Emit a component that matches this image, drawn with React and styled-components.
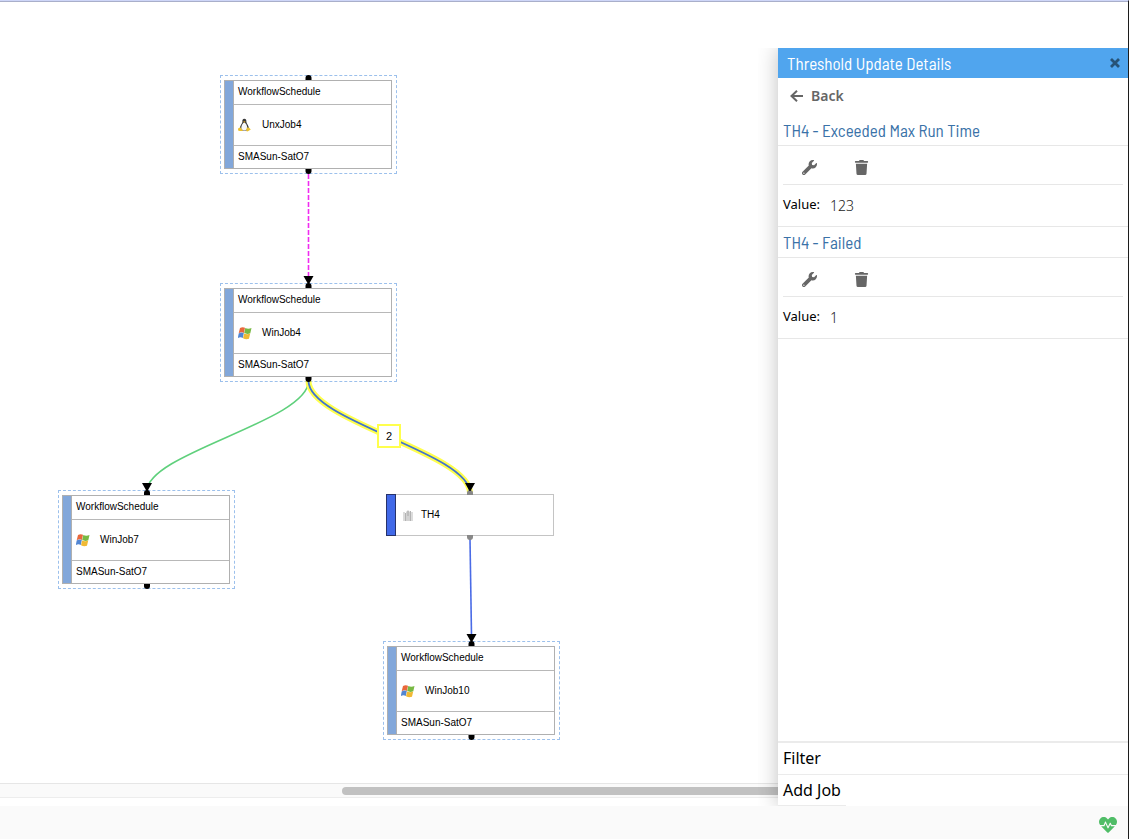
import React from "react"
import styled, { createGlobalStyle } from "styled-components"
import { FaWrench, FaTrash, FaHeartbeat } from "react-icons/fa"

const GlobalStyle = createGlobalStyle`
  * {
    box-sizing: border-box;
  }

  body {
    margin: 0;
    background: white;
    color: black;
    font-family: "Noto Sans", sans-serif;
  }

  h2, h3, p, dl, dt, dd {
    margin: 0;
  }

  button {
    border: none;
    padding: 0;
    background: transparent;
    font-family: inherit;
    cursor: pointer;
  }
`

const Page = styled.div`
  min-height: 100vh;
  display: flex;
  flex-direction: column;
  border-top: 1px solid #ced6f8;
  border-right: 1px solid #1c1c1c;
`

const Workspace = styled.main`
  flex: 1;
  display: flex;
  border-top: 1px solid #a9afca;
`

const Board = styled.section`
  flex: 1;
  min-width: 0;
  display: flex;
  flex-direction: column;
  padding-bottom: 8px;
`

const Canvas = styled.div`
  position: relative;
  flex: 1;
  min-height: 760px;
  overflow: hidden;
  font-family: "Liberation Sans", Arial, sans-serif;
  font-size: 10px;
  line-height: 12px;
`

const ScrollTrack = styled.div`
  height: 15px;
  display: flex;
  align-items: center;
  justify-content: flex-end;
  background: #fafafa;
  border-top: 1px solid #e6e6e6;
  border-bottom: 1px solid #ededed;
`

const ScrollThumb = styled.div`
  width: 56%;
  height: 8px;
  border-radius: 4px 0 0 4px;
  background: #c1c1c1;
`

const Edges = styled.svg`
  position: absolute;
  left: 0;
  top: 0;
  pointer-events: none;
`

const NodeFrame = styled.div`
  position: absolute;
  left: ${({ $x }) => $x}px;
  top: ${({ $y }) => $y}px;
  width: 177px;
  padding: 4px 4px 4px 3px;
  border: 1px dashed #9cc0ec;
`

const JobCard = styled.article`
  display: flex;
  border: 1px solid #b0b0b0;
  background: white;
`

const JobStripe = styled.div`
  width: 9px;
  background: #82a7da;
  border-right: 1px solid #b0b0b0;
`

const JobRows = styled.div`
  flex: 1;
  display: grid;
  grid-template-rows: 23px 41px 23px;
`

const JobRow = styled.div`
  display: flex;
  align-items: center;
  gap: 10px;
  padding: 0 0 1px 4px;

  & + & {
    border-top: 1px solid #b8b8b8;
  }
`

const ThresholdCard = styled.article`
  position: absolute;
  left: ${({ $x }) => $x}px;
  top: ${({ $y }) => $y}px;
  width: 168px;
  height: 42px;
  display: flex;
  align-items: center;
  gap: 7px;
  border: 1px solid #c4c4c4;
  border-left: none;
  background: white;
`

const ThresholdStripe = styled.div`
  width: 10px;
  height: 42px;
  background: #4169e8;
  border: 1px solid #27336b;
`

const EdgeBadge = styled.div`
  position: absolute;
  left: ${({ $x }) => $x}px;
  top: ${({ $y }) => $y}px;
  width: 24px;
  height: 24px;
  display: flex;
  align-items: center;
  justify-content: center;
  border: 2px solid #ffff4d;
  background: white;
  font-size: 11px;
`

const Panel = styled.aside`
  width: 350px;
  margin-top: 46px;
  display: flex;
  flex-direction: column;
  background: white;
  box-shadow: 0 0 20px rgba(0, 0, 0, 0.25);
  clip-path: inset(0 0 0 -20px);
`

const PanelHeader = styled.header`
  height: 30px;
  display: flex;
  align-items: center;
  justify-content: space-between;
  padding: 0 8px 0 9px;
  background: #50a5ee;
  color: white;
`

const PanelTitle = styled.h2`
  font: 400 17px/24px "Barlow Semi Condensed", "Barlow Condensed", "Liberation Sans Narrow", Roboto, sans-serif;
`

const CloseButton = styled.button`
  display: flex;
  color: #275377;
`

const BackButton = styled.button`
  height: 36px;
  display: flex;
  align-items: center;
  gap: 8px;
  padding: 0 12px 1px;
  color: #666;
  font-size: 14px;
  font-weight: 600;
`

const Threshold = styled.section`
  border-bottom: 1px solid #e7e7e7;

  & + & {
    margin-top: -1px;
  }
`

const ThresholdTitle = styled.h3`
  height: 32px;
  padding: 4px 5px;
  border-bottom: 1px solid #e7e7e7;
  color: #3a72a8;
  font: 400 17px/24px "Barlow Semi Condensed", "Barlow Condensed", "Liberation Sans Narrow", Roboto, sans-serif;
`

const Tools = styled.div`
  height: 39px;
  display: flex;
  align-items: center;
  gap: 37px;
  margin: 0 5px;
  padding: 4px 19px 0;
  border-bottom: 1px solid #e7e7e7;
`

const ToolButton = styled.button`
  display: flex;
  color: #666;
  font-size: 15px;
`

const ValueLine = styled.dl`
  height: 41px;
  display: flex;
  align-items: center;
  gap: 10px;
  padding: 0 5px 2px;
  font-size: 13px;

  dt {
    padding-bottom: 2px;
  }

  dd {
    padding-top: 2px;
    color: #222;
    font-size: 14px;
    font-weight: 300;
  }
`

const PanelMenu = styled.nav`
  margin-top: auto;
  display: flex;
  flex-direction: column;
  align-items: flex-start;
  border-top: 2px solid #ebebeb;
`

const MenuButton = styled.button`
  width: ${({ $wide }) => ($wide ? "100%" : "auto")};
  height: ${({ $wide }) => ($wide ? 32 : 31)}px;
  padding: 0 5px ${({ $wide }) => ($wide ? 2 : 0)}px;
  border-bottom: 1px solid #ebebeb;
  color: black;
  font-size: 16px;
  text-align: left;
`

const StatusBar = styled.footer`
  height: 33px;
  display: flex;
  align-items: center;
  justify-content: flex-end;
  padding: 5px 11px 0;
  background: #fafafa;
  color: #50bd67;
  font-size: 18px;
`

const jobs = [
  { name: "UnxJob4", os: "linux", x: 220, y: 73 },
  { name: "WinJob4", os: "windows", x: 220, y: 281 },
  { name: "WinJob7", os: "windows", x: 58, y: 488 },
  { name: "WinJob10", os: "windows", x: 383, y: 639 },
]

const thresholds = [
  { name: "TH4 - Exceeded Max Run Time", value: "123" },
  { name: "TH4 - Failed", value: "1" },
]

const LinuxIcon = () => (
  <svg width="14" height="14" viewBox="0 0 14 14" aria-hidden="true">
    <path d="M6.300 .8c-1.700 0-2.100 1.300-1.900 3.100C4.200 5.500 1.900 7.500 1.800 10.500L3.500 12.500h5.400l2-2C10.900 7.600 8.500 5.600 8.400 3.900 8.500 2 7.900.8 6.300.8z" fill="#3a3a3a" />
    <path d="M6.300 4.600C4.700 5.200 2.900 8 3.400 11.200c1.600 1.300 4.200 1.300 5.800 0C9.700 8.400 7.900 5.200 6.300 4.600z" fill="#f7f7f7" />
    <path d="M5.100 3.800l1.300-.5 1.200.5-1.200 1z" fill="#e8a91c" />
    <path d="M.1 10.600l2.200-1.400 2.600 3.200c-.8 1.200-3.200.5-4.800 0zM8.300 12.400l.5-3 2.300.3 1.700 1.700-2.900 1.900c-.9.300-1.500 0-1.600-.9z" fill="#ecc02a" />
  </svg>
)

const WindowsIcon = () => (
  <svg width="14" height="14" viewBox="0 0 14 14" aria-hidden="true">
    <path d="M2 2Q4.500.5 7 1.700L5.900 6.900Q3.400 5.700 .7 7.200z" fill="#e9683b" />
    <path d="M7.300 1.900Q10.100 3.400 13.500 2L12.300 7.300Q9.100 8.600 6.200 7.100z" fill="#78b943" />
    <path d="M.7 7.400Q3.400 6 5.800 7.100L4.800 11.900Q2.200 10.700 -.2 12.100z" fill="#5286d3" />
    <path d="M6.100 7.400Q8.900 8.800 12.200 7.600L11 12.800Q7.900 13.800 5 12.300z" fill="#f0b934" />
  </svg>
)

const ThresholdIcon = () => (
  <svg width="11" height="11" viewBox="0 0 11 11" aria-hidden="true">
    <path d="M0 2h2v9H0zM8 2h2v9H8z" fill="#dcdcdc" />
    <path d="M3 2l2-2 2 2v9H3z" fill="#d2d2d2" />
    <path d="M2.500 3v8M5 1v5M7.500 1v10" stroke="#a0a0a0" strokeWidth=".8" />
  </svg>
)

const Arrow = ({ x, y }) => <path d={`M${x - 5} ${y}h10l-4.500 8h-1z`} fill="black" />

const Ports = ({ x, top, bottom, color = "black" }) => (
  <g fill={color}>
    <path d={`M${x - 3} ${top + 5}v-2a3 3 0 0 1 6 0v2z`} />
    <path d={`M${x - 3} ${bottom}v2a3 3 0 0 0 6 0v-2z`} />
  </g>
)

const Job = ({ job }) => (
  <NodeFrame $x={job.x} $y={job.y}>
    <JobCard>
      <JobStripe />
      <JobRows>
        <JobRow>WorkflowSchedule</JobRow>
        <JobRow>
          {job.os === "linux" ? <LinuxIcon /> : <WindowsIcon />}
          {job.name}
        </JobRow>
        <JobRow>SMASun-SatO7</JobRow>
      </JobRows>
    </JobCard>
  </NodeFrame>
)

const ThresholdDetails = ({ threshold }) => (
  <Threshold>
    <ThresholdTitle>{threshold.name}</ThresholdTitle>
    <Tools>
      <ToolButton aria-label="Edit"><FaWrench /></ToolButton>
      <ToolButton aria-label="Delete"><FaTrash /></ToolButton>
    </Tools>
    <ValueLine>
      <dt>Value:</dt>
      <dd>{threshold.value}</dd>
    </ValueLine>
  </Threshold>
)

const App = () => {
  return (
    <>
      <GlobalStyle />
      <Page>
        <Workspace>
          <Board>
            <Canvas>
              {jobs.map((job) => (
                <Job key={job.name} job={job} />
              ))}
              <ThresholdCard $x={386} $y={492}>
                <ThresholdStripe />
                <ThresholdIcon />
                TH4
              </ThresholdCard>
              <Edges width="778" height="760" fill="none">
                <path d="M308.500 172V275" stroke="#f02cf0" strokeWidth="1.600" strokeDasharray="5 2" />
                <path d="M308.500 379C308.500 419 147 451 147 489" stroke="#5fd07c" strokeWidth="1.600" />
                <path d="M308.500 379C308.500 419 470 451 470 491" stroke="#ffff4d" strokeWidth="6" />
                <path d="M308.500 379C308.500 419 470 451 470 491" stroke="#4172d0" strokeWidth="1.800" />
                <path d="M470 537L471.500 634" stroke="#4a6be6" strokeWidth="1.600" />
                <Ports x={308.5} top={73} bottom={167} />
                <Ports x={308.5} top={281} bottom={375} />
                <Ports x={147} top={488} bottom={582} />
                <Ports x={471.5} top={639} bottom={733} />
                <Ports x={470} top={488} bottom={533} color="#888" />
                <Arrow x={308.5} y={274} />
                <Arrow x={147} y={481} />
                <Arrow x={470} y={481} />
                <Arrow x={471.5} y={632} />
              </Edges>
              <EdgeBadge $x={377} $y={422}>2</EdgeBadge>
            </Canvas>
            <ScrollTrack>
              <ScrollThumb />
            </ScrollTrack>
          </Board>
          <Panel>
            <PanelHeader>
              <PanelTitle>Threshold Update Details</PanelTitle>
              <CloseButton aria-label="Close">
                <svg width="10" height="10" viewBox="0 0 10 10" stroke="currentColor" strokeWidth="2.800">
                  <path d="M1 1l8 8M9 1L1 9" />
                </svg>
              </CloseButton>
            </PanelHeader>
            <BackButton>
              <svg width="13" height="12" viewBox="0 0 13 12" fill="none" stroke="currentColor" strokeWidth="2">
                <path d="M13 6H2M7 .8L1.500 6 7 11.200" />
              </svg>
              Back
            </BackButton>
            {thresholds.map((threshold) => (
              <ThresholdDetails key={threshold.name} threshold={threshold} />
            ))}
            <PanelMenu>
              <MenuButton $wide>Filter</MenuButton>
              <MenuButton>Add Job</MenuButton>
            </PanelMenu>
          </Panel>
        </Workspace>
        <StatusBar>
          <FaHeartbeat role="img" aria-label="Connected" />
        </StatusBar>
      </Page>
    </>
  )
}

export default App
